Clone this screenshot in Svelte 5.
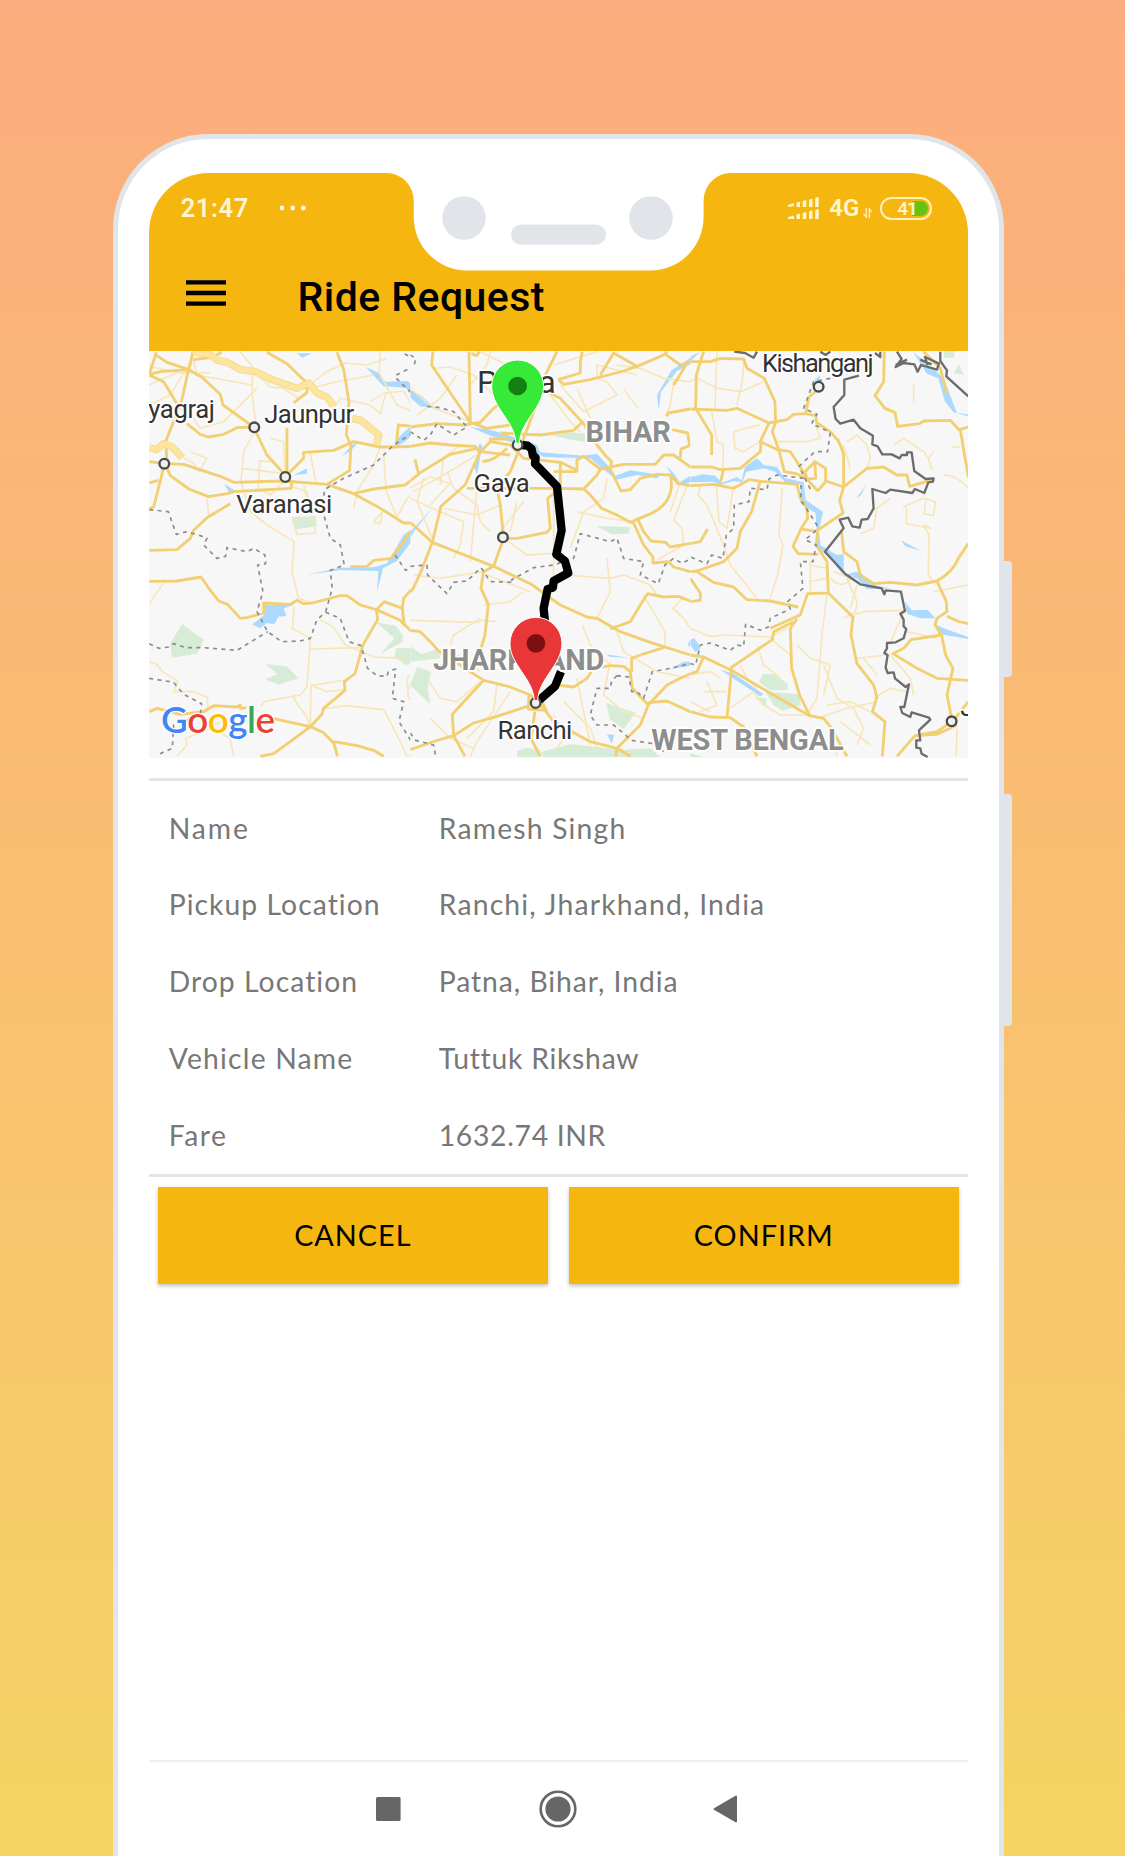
<script>
  const details = [
    ['Name', 'Ramesh Singh'],
    ['Pickup Location', 'Ranchi, Jharkhand, India'],
    ['Drop Location', 'Patna, Bihar, India'],
    ['Vehicle Name', 'Tuttuk Rikshaw'],
    ['Fare', '1632.74 INR']
  ];

  const google = [
    ['G', '#4285f4'], ['o', '#ea4335'], ['o', '#fbbc05'],
    ['g', '#4285f4'], ['l', '#34a853'], ['e', '#ea4335']
  ];

  // Map geometry, one entry per map sheet: west, centre, east.
  const sheets = [
    {
      x: 140,
      width: 270,
      parks: [
        'M126 838L190 884L170 926L95 938L90 894Z',
        'M376 957L440 964L474 1000L415 1019L374 1003L412 988Z',
        'M455 516L525 514L530 543L468 553Z',
        'M708 832L766 842L788 870L785 892L720 927L762 880Z',
        'M768 910L840 908V948L796 960L762 934Z',
        'M840 965L812 985L806 1030L840 1062Z'
      ],
      waters: [
        'M372 779L462 779L430 790L438 813L415 815L402 838L380 834L360 850L336 838L370 812Z',
        'M498 690L600 668L700 667L740 655L790 570L840 535V555L770 648L728 670L710 742L714 678L600 675Z',
        'M676 66L715 84L735 110L800 108L840 132V172L795 128L730 124Z',
        'M768 306L772 280L806 248L826 256L800 285Z',
        'M460 390L500 370V386Z', 'M252 416L282 436V446L266 442Z',
        'M470 25L516 25L486 38Z', 'M606 334L634 300L654 292L630 318Z'
      ],
      highways: [
        'M158 20L212 30L232 46L262 52L300 74L345 80L400 106L470 130L506 114L530 144L560 156L580 182',
        'M636 220L662 226L716 270L708 300', 'M27 308L48 314L70 296L96 306L126 338'
      ],
      minors: [
        'M300 20L336 66L336 150L348 245', 'M158 40L170 90L336 120', 'M346 84L390 126L430 130L470 158L500 150',
        'M520 110L560 80L615 54L680 60L740 40', 'M510 130L590 110L700 90', 'M720 20L716 84L770 180L840 210',
        'M580 190L600 160L690 180L720 206L735 150', 'M27 120L70 100L110 84', 'M27 64L120 84L210 84',
        'M150 50L90 150L27 180', 'M124 170L180 250L250 230L350 130', 'M348 250L310 320L302 410L330 500L380 540L462 590L455 680L474 760L500 768',
        'M304 370L430 386', 'M358 346L354 430L390 450L430 410', 'M356 348L400 350', 'M390 280L430 290L434 380',
        'M510 324L526 410', 'M456 425L500 440L526 564L470 568L455 520', 'M490 420L500 468L552 500', 'M27 776L70 712',
        'M200 462L206 516', 'M128 338L160 355L176 380L200 340L150 320', 'M770 310L720 304L700 360L650 440L640 490',
        'M730 330L738 440L770 516', 'M770 516L800 460L840 430', 'M700 530L726 500L720 536L700 532',
        'M462 784L456 850L510 880L508 912L662 908', 'M540 824L580 848L615 900L700 936L785 940L800 930',
        'M508 912L500 1025L480 1050L370 1070L362 1084', 'M510 1022L612 1006', 'M512 1022L510 1145', 'M456 1048L470 1076L496 1110L510 1145',
        'M512 1020L560 1040L612 1034', 'M550 1092L614 1082L730 1094L770 1170L800 1234', 'M27 950L50 958L66 980L112 1008L100 1040L160 1040L200 1056L204 1088',
        'M110 1234L140 1200L136 1180L190 1160L240 1130', 'M212 1150L270 1180L280 1234', 'M800 1000L840 960M800 1000L805 1060L840 1080',
        'M690 170L730 145L790 138L820 190'
      ],
      roads: [
        'M48 22L27 88', 'M27 88L60 80L146 74L158 20', 'M44 28L80 52L146 74L184 96L240 148L248 180L340 246L380 330L436 392', 'M27 90L70 110L110 176',
        'M144 76L124 168L76 290L80 350', 'M140 236L180 268L204 276L250 268L290 248L340 246', 'M160 44L220 36L244 22',
        'M380 22L440 56L500 114V142L460 174', 'M590 22L610 72L626 170L618 270L632 300L628 376L560 418',
        'M440 248L440 390L490 340L490 322L580 316L640 290L720 306L840 304', 'M768 300L774 240L840 246', 'M72 355L130 358L240 394L280 412L430 408L560 418L640 446L720 490L790 534L828 534L790 590L752 640L700 646L680 664L630 665',
        'M76 360L90 392L146 432L204 455L262 446L280 440L452 430L456 404', 'M27 490L40 486L72 360M27 350L70 356M27 414L54 406',
        'M640 446L700 432L794 420L840 386', 'M270 476L200 518L160 556L150 580L110 614L27 616',
        'M27 709L110 708L182 696L210 736L235 768L262 778L300 820L320 818L370 804V774L450 778L470 766L490 776L516 774L600 752L620 752L660 780L708 794L732 770L786 790L790 760L816 730L840 680',
        'M708 794L712 824L668 900L644 986L612 1010L614 1036L550 1090L545 1108L510 1145L450 1190L400 1226L360 1234',
        'M708 794L780 826L792 840L786 790M792 838L812 858L840 858', 'M27 1100L50 1090L120 1108L190 1100L220 1082L290 1086L300 1080L300 1090L318 1088', 'M400 1120L440 1130L510 1145L548 1162L580 1194L592 1234', 'M580 1190L650 1202L700 1216L730 1234', 'M810 1234L824 1218L840 1212'
      ],
      dashes: [
        'M27 494L84 500L108 568L140 560L180 572L200 580L190 600L230 640L256 634L260 608L320 620L340 610L374 630L376 656L352 660L368 740L350 800L382 860L424 890L480 888L510 880L530 824L556 802L600 820L626 890L662 902L682 970L710 992L740 994L744 980L766 972L756 1060L790 1070L776 1130L816 1194L840 1196',
        'M27 896L56 910L86 906L100 896L136 908L190 908L290 916L382 860', 'M27 1000L100 1012L130 1048L184 1076L180 1110L100 1140L96 1210L50 1230',
        'M556 800L576 730L570 676L612 660L600 600L570 580L548 500L552 434L610 400L700 360L760 300L830 256', 'M768 90L820 64L820 40L786 24', 'M768 100L840 170', 'M764 630L796 676L836 662'
      ],
      borders: []
    },
    {
      x: 410,
      width: 280,
      parks: [
        'M420 270L480 262L524 266V290L480 284Z', 'M556 543L660 546L655 566L605 568Z', 'M588 1074L676 1104L640 1152L598 1122Z',
        'M0 904L34 928L84 912L90 940L0 950Z', 'M20 966L62 980L52 1030L60 1078L0 1020Z',
        'M320 1218L350 1208L390 1214V1236H320Z', 'M390 1222L480 1198L640 1214L720 1210L750 1236H400Z'
      ],
      waters: [
        'M0 136L30 150L76 190L30 184L0 158Z', 'M180 246L240 254L310 276L380 300L390 322L520 332L560 326L600 370L616 392L660 376L750 390L740 400L680 390L618 404L540 340L400 336L330 300L240 272Z',
        'M0 560L66 490L10 560L0 578Z', 'M206 296L216 300L200 390L190 360L202 330Z', 'M840 38L784 76L740 150L745 196L752 140L800 78L840 58Z',
        'M768 362L790 385L808 412L840 392V412L820 420L800 418Z', 'M590 1168L612 1170L604 1196Z', 'M780 972L820 950L840 950V962Z', 'M588 928L654 938L600 936Z', 'M840 884L832 898L840 908Z'
      ],
      highways: [],
      minors: [
        'M70 70L120 66L190 90L260 160', 'M180 120L230 60L240 20', 'M0 130L70 190L180 230', 'M20 210L90 160L140 90',
        'M210 20L290 60', 'M430 60L560 20', 'M450 120L520 200L620 150L590 110L560 100L560 60L680 90', 'M620 60L690 70L760 100L840 110',
        'M420 150L480 230L510 260', 'M640 130L660 160L684 190', 'M790 110L780 180L770 205', 'M540 220L500 130',
        'M10 440L100 390L200 330', 'M40 400L20 470L70 590', 'M100 490L200 510L270 480', 'M110 380L130 430L200 480L210 530L240 560',
        'M200 430L180 650', 'M150 300L100 340L90 420', 'M0 430L60 395L118 416L60 480', 'M0 460L90 500L160 530L150 600L130 640', 'M320 470L300 560M340 470L270 560',
        'M280 580L350 630L430 625', 'M10 690L90 700L220 680', 'M220 780L300 770L340 740', 'M0 826L200 832L216 826L256 830',
        'M210 820L130 870L120 900', 'M230 690L360 740', 'M470 690L600 700L640 690L720 720L740 750', 'M516 840L540 900L600 960',
        'M590 400L580 460L520 500L480 610', 'M590 640L600 740L560 820', 'M430 390L430 700', 'M500 500L590 520L670 530',
        'M832 418L790 525L815 550L820 600L740 645', 'M780 500L810 410', 'M500 1000L540 1200', 'M460 1070L540 1150L560 1210',
        'M260 1010L250 1100L170 1180', 'M210 1010L140 1070L90 1060L50 1000', 'M90 960L140 930L210 980', 'M300 1040L200 1190L180 1234',
        'M430 1110L470 1170L440 1210', 'M620 860L640 920L740 980L840 1000', 'M700 750L764 860V910', 'M820 756L788 790L820 820L840 850', 'M60 1120L120 1180L190 1210',
        'M600 950L580 1050L640 1100L700 1120'
      ],
      roads: [
        'M68 20L64 60L180 232L176 20', 'M184 24Q200 40 206 20', 'M0 246L80 236L160 240L210 232L250 190L320 140', 'M180 232L230 250L300 240',
        'M440 20L400 100L370 200L344 270L300 380L260 430L270 480L280 580L320 580L410 562L420 550L412 460L450 430L520 432',
        'M444 104L460 118L540 104L640 78L680 64', 'M444 104L510 84V52L516 20', 'M570 90L610 24L680 64L760 30L770 20', 'M766 28L810 60L840 52M826 62L790 120',
        'M390 130L450 160L516 232L490 256L390 270L270 264', 'M210 320L240 290L300 300L340 340L450 352L500 376L500 344L520 334L570 372L640 358L735 358L760 330L790 330L840 366',
        'M240 290L240 282H300', 'M210 320L300 330M216 350Q250 350 290 310', 'M0 304L60 294L120 300L196 304L208 324L164 420L92 484L66 592L35 673L10 728L0 742', 'M0 408L30 383L120 328L200 310M14 343L24 384',
        'M430 380H500M450 352V440M430 400V430H170', 'M520 432L560 390L570 372', 'M516 230L560 300L584 330L604 350L600 372L632 438L660 434L690 400L740 388L780 390Q800 480 700 515L680 524L660 532L620 510L574 490L540 450L520 432',
        'M780 390L804 416L840 422', 'M768 214L774 204L840 192M786 254L832 264L838 302L812 312L810 340',
        'M680 518L700 560L722 588L765 592L780 606L840 595', 'M668 530L700 600L728 636V654L775 650L790 666L840 680', 'M0 532L66 592L250 664L360 716L450 780L530 816L560 820L630 860L720 892L840 930',
        'M280 580L250 664L220 680L212 730L234 778L224 870L212 910', 'M600 852L660 830L690 780L712 746L760 756L804 754L840 768', 'M690 930L760 908',
        'M0 856L30 860L60 890L85 918L220 1006L300 1026L360 1050L400 1090L430 1130L540 1190L620 1210L660 1234',
        'M220 1006L126 1108L130 1172L75 1188L0 1214', 'M130 1172L190 1134L260 1114L350 1084', 'M130 1172L164 1234', 'M356 1050L354 1092L408 1096L390 1060M374 1100L362 1180L390 1234',
        'M440 1020L490 1026L530 1000L550 970L600 962L640 964L660 980L666 1030L714 1080', 'M664 980L664 940L690 930', 'M714 1080L770 1020L810 1000L840 986', 'M714 1080L690 1140L620 1210L616 1234', 'M714 1073L770 1068L840 1100'
      ],
      dashes: [
        'M0 30L16 40L10 70', 'M0 260L40 286L60 270L80 236L130 270L170 246L130 200L90 188L50 184',
        'M0 664L50 660L52 690L110 746L130 712L170 708L212 668L240 710L310 712L304 704L370 668L430 660L490 640L510 566L600 590L620 580L640 640L700 650L690 690L744 716L764 660L790 640L815 655L840 642',
        'M620 992L656 996L664 1040L680 1040L700 1060L726 980L770 972L840 956', 'M620 992L604 1008L600 1030L560 1030L540 1110L560 1140L610 1140L664 1186L730 1196L760 1220',
        'M0 1164L16 1186L70 1200L76 1234'
      ],
      borders: []
    },
    {
      x: 690,
      width: 290,
      parks: [
        'M218 986L250 988L292 1016V1034L240 1036L206 1012Z', 'M225 1040L326 1048L332 1080L276 1098L250 1080Z', 'M192 1056L228 1060V1086Z',
        'M760 18H792V38H760Z', 'M806 58L820 90L790 84Z', 'M0 1224L40 1236H0Z'
      ],
      waters: [
        'M0 396L40 388L75 392L94 414L140 396L154 406L164 366L200 340L220 360L260 366L282 398L340 412L346 466L398 500L386 556L390 600L440 630L460 628V690L500 680L520 694L560 722L600 730L530 732L500 700L460 692L420 640L380 606L376 505L330 474L332 418L290 418L255 380L220 370L168 380L156 412L130 408L90 420L70 410L0 412Z',
        'M668 20L720 64L760 100L800 204L834 208V214L790 202L764 170L744 100L710 86Z',
        'M644 770L664 796L712 794L735 820L690 820L650 806Z', 'M734 838L760 850L834 876V882L744 866Z',
        'M498 460L530 418L510 452Z', 'M632 586L692 618L645 604Z', 'M90 974L130 986L220 1048L210 1054Z', 'M0 884L12 880L32 908L16 922L0 900Z',
        'M0 36L28 20L0 50Z', 'M372 106L390 90L384 120Z'
      ],
      highways: [],
      minors: [
        'M0 110L20 100L80 130L150 140L220 110', 'M80 20L74 190', 'M160 50L156 110L140 180', 'M130 260L180 246L210 240', 'M130 260L134 310L160 320L210 290',
        'M64 200L80 290L100 300L96 400', 'M260 290L350 290L390 280L376 240', 'M78 420L86 530L110 550L130 420', 'M30 420L24 450L50 480L100 600L120 660L200 760',
        'M276 430L266 570L278 600L262 690L240 760', 'M470 290L500 270L530 300L540 340L530 370', 'M460 310L440 290L450 280', 'M480 370L460 300',
        'M670 120V176', 'M610 300L640 280L700 320L714 340L726 376', 'M714 340L730 320M785 306H810', 'M760 390Q800 390 834 430',
        'M638 486L700 460L735 470L730 512L702 506L706 470M648 488V536L720 550L700 540L716 570L714 690L730 710', 'M510 566L550 550L560 490L600 460',
        'M420 700Q460 740 490 690M470 700L500 770L496 800L460 820M430 680L480 700', 'M356 660L410 670M356 710L410 700M360 650V740', 'M500 720L480 790',
        'M410 750L396 860L380 1060L350 1110', 'M320 900L360 940L420 960L400 1050', 'M240 880L300 930M200 900L220 960L270 1000', 'M150 960L170 1000L200 1030',
        'M0 850L60 875L100 870L240 876L290 850', 'M0 990L60 980L90 1000', 'M40 1040L110 1040M0 1070L60 1100', 'M50 1010L80 1080L30 1100', 'M120 1090L190 1040L220 1080L270 1110L350 1110',
        'M490 810L520 800L640 796', 'M500 940L590 930M520 940L560 990', 'M640 800L610 870L600 900', 'M550 1060L600 1030L650 1040', 'M410 1080L480 1070L540 1100',
        'M380 1120L470 1090L560 1070', 'M600 930L660 1000L670 1050', 'M730 740L834 720', 'M650 860L740 880', 'M800 1150L798 1234', 'M420 1150L440 1234M450 1130L540 1200', 'M400 960L440 1060L490 1090L520 1150L500 1200'
      ],
      roads: [
        'M40 20L18 90L16 190L64 270V330', 'M0 50H60L90 40L160 42L170 70L222 100L254 170L256 232L246 260L266 316L282 380L318 386L350 402L382 438',
        'M0 192L110 196L140 190L236 234L290 224L310 208L346 206L356 156L400 120', 'M346 206L376 212L380 234L420 260L446 290L460 326V426L448 466L458 504L382 556', 'M236 234L210 290L262 314L300 320L320 350L350 400L344 380L374 350L406 370V408L460 426',
        'M374 350L376 400L350 402M406 410L382 438', 'M0 366H64L90 374L150 370L210 320L212 290', 'M100 374L90 412', 'M0 422L70 418L130 430L176 404L204 408L320 418L330 460L350 490L352 520L332 552L382 560L378 600L410 650L414 744L352 746L330 810L240 850',
        'M210 408L184 500L150 560L140 610L100 650L20 678L0 680', 'M0 596L30 590L52 552', 'M332 552L308 604L324 626L384 628', 'M20 680L70 712L130 726L170 764L240 768L324 786', 'M0 700L30 744V766L0 770',
        'M460 426L530 370L580 366L620 390H650L658 424L728 404', 'M454 560L460 620L500 650L510 690L550 716L600 712L680 720L740 708Q790 680 804 640L834 596', 'M582 20L580 110L554 152L584 190L614 202L622 244L688 236L700 228L780 226L806 254L834 246M810 254L834 396', 'M700 20L750 70L770 146',
        'M414 744L488 816L482 870L500 956L550 1020L560 1058L546 1100L584 1130L576 1234', 'M320 822L300 850L304 970L328 1050L358 1112L400 1120L424 1150L470 1234', 'M310 830L250 860L246 884L140 956L124 966L110 1120',
        'M0 930L40 936L120 974L250 1050L358 1112', 'M40 936L20 980L0 986', 'M0 1100L60 1116L120 1118L160 1146L200 1234', 'M740 708L768 770L770 800L740 820L734 840L754 870L662 884L640 910L608 926L680 970L740 1000L834 1006',
        'M754 870L766 930L788 970L770 1050L784 1120', 'M770 814L806 830L834 836', 'M834 1070L790 1126L740 1160L674 1172L620 1234M674 1172L740 1168L800 1140'
      ],
      dashes: [
        'M420 100L370 110L340 190L380 208L364 236L420 262L412 320L374 320L326 364L364 440',
        'M340 400L260 390L236 402L230 434L180 430L176 470L132 480L130 550L108 570L98 640L64 630L50 656L0 636',
        'M332 420V466L380 540L374 560L344 584L378 600L368 650L330 650L338 730L292 770L300 792L240 820L234 846L210 856L166 838L160 904L140 900L120 916L60 894L30 900L16 960L0 956'
      ],
      borders: [
        'M506 92L462 104V150L430 186L436 222L450 236L490 224L510 250L548 272L546 298L562 304L576 328H604L628 340L634 330H650V322H664L672 378L706 402L730 400L728 410L714 412L702 444L674 432L666 444L600 434L586 444L546 432L550 490L532 522L514 524L508 548L486 544L474 518L448 524L460 550L404 620L466 688L510 718L574 730L582 748L586 736L632 740L644 798L630 806L640 824V844L648 852L640 880L616 892L590 894V910L582 924L592 930L586 968L592 984L610 982L614 1000L646 1026L656 1018L642 1086H630L636 1104L660 1116L664 1102L716 1118L720 1124L686 1156L690 1186H678V1208L690 1210L694 1226L712 1236',
        'M132 20L164 24L190 38L200 20M390 20L406 30L420 20M554 24L570 36V20',
        'M620 20L634 42L616 66L640 54L672 58L682 80L692 60L740 74L746 56L704 36L712 60M616 60L650 44M690 44L724 58M750 20V48L770 76L768 94L834 154'
      ]
    }
  ];

  const towns = [
    [342, 247], [72, 356], [435, 396], [1088, 577], [2035, 125], [2434, 1129], [1132, 300], [1186, 1074]
  ];
</script>

{#snippet pin(x, y, fill, dot)}
  <g transform="translate({x} {y})">
    <path d="M-5 172C-8 105 -78 65 -78 0A78 78 0 0 1 78 0C78 65 8 105 5 172Z" {fill} stroke="#fff" stroke-width="3" />
    <circle r="28" fill={dot} />
  </g>
{/snippet}

<main>
  <div class="phone">
    <i class="key short"></i>
    <i class="key long"></i>
    <div class="screen">
      <svg class="notch" width="346" height="99" viewBox="0 0 346 99">
        <path d="M0 0A27.5 27.5 0 0 1 27.7 27.5V44A53.5 53.5 0 0 0 81 97.6H264A53.5 53.5 0 0 0 317.6 44V27.5A27.5 27.5 0 0 1 346 0Z" fill="#fff" />
        <circle cx="78" cy="45" r="21.8" fill="#e1e5ea" />
        <circle cx="265" cy="45" r="21.8" fill="#e1e5ea" />
        <rect x="125" y="51.5" width="95" height="20.3" rx="10.1" fill="#e1e5ea" />
      </svg>

      <header>
        <div class="status">
          <span class="clock">21:47</span>
          <svg class="dots" width="28" height="6" viewBox="0 0 28 6" fill="#fffbe9">
            <circle cx="3" cy="3" r="2.4" /><circle cx="13.7" cy="3" r="2.4" /><circle cx="24.4" cy="3" r="2.4" />
          </svg>
          <svg class="signal" width="32" height="24" viewBox="0 0 32 24" fill="#fff5cf">
            <path d="M0 8L6 6V9L0 10ZM8.500 5.500L12 4.700V10H8.500ZM14.700 4L18.300 3V10H14.700ZM21 2.500L24.500 1.700V10H21ZM27.200 1L30.700 0V10H27.200Z" />
            <path d="M0 20L6 18.500V22H0ZM8.500 17.500L12 16.500V22H8.500ZM14.700 16L18.300 15V22H14.700ZM21 14.500L24.500 13.500V22H21ZM27.200 13L30.700 12V22H27.200Z" />
          </svg>
          <span class="net">4G</span>
          <svg class="arrows" width="10" height="10" viewBox="0 0 10 10" fill="none" stroke="#fff0bd" stroke-width="1.400">
            <path d="M3.200 0V9L0.500 6M6.300 10V1L9 4" />
          </svg>
          <span class="battery"><span>41</span></span>
        </div>
        <div class="bar">
          <svg width="40" height="26" viewBox="0 0 40 26"><path d="M0 2.300H40M0 13H40M0 23.700H40" stroke="#000" stroke-width="4.300" /></svg>
          <h1>Ride Request</h1>
        </div>
      </header>

      <svg class="map" viewBox="148.700 351 819.600 406.600" preserveAspectRatio="none">
        {#each sheets as s}
          <svg x={s.x} y="345" width={s.width} height="420" viewBox="0 0 {s.width * 3} 1260">
            {#each s.parks as d}<path class="park" {d} />{/each}
            {#each s.waters as d}<path class="water" {d} />{/each}
            {#each s.minors as d}<path class="minor" {d} />{/each}
            {#each s.roads as d}<path class="road" {d} />{/each}
            {#each s.highways as d}<path class="casing" {d} /><path class="highway" {d} />{/each}
            {#each s.dashes as d}<path class="dash" {d} />{/each}
            {#each s.borders as d}<path class="border" {d} />{/each}
          </svg>
        {/each}
        <g transform="translate(140 345) scale(.33333)">
          <path class="route" d="M1146 300L1162 302L1174 312L1178 332L1186 338L1184 356L1250 424L1264 556L1248 628L1274 648L1284 684L1240 708L1238 728L1222 732L1210 790L1216 850" />
          <path class="route" d="M1262 980L1244 1024L1196 1066" />
          {#each towns as [x, y]}<circle class="town" cx={x} cy={y} r="14.500" />{/each}
          <g class="label">
            <text x="24" y="220" textLength="200">yagraj</text>
            <text x="372" y="234" textLength="270">Jaunpur</text>
            <text x="288" y="504" textLength="288">Varanasi</text>
            <text x="1000" y="440" textLength="168">Gaya</text>
            <text x="1072" y="1182" textLength="224">Ranchi</text>
            <text x="1865" y="80" textLength="335">Kishanganj</text>
            <text class="large" x="1010" y="145" textLength="236">Patna</text>
            <text x="2460" y="1113">J</text>
          </g>
          <g class="label region">
            <text x="1336" y="290" textLength="256">BIHAR</text>
            <text x="878" y="976" textLength="514">JHARKHAND</text>
            <text x="1533" y="1214" textLength="577">WEST BENGAL</text>
          </g>
          {@render pin(1132, 123, '#38ea38', '#128012')}
          {@render pin(1187, 895, '#e93636', '#7c1011')}
          <text class="google" x="62" y="1164" textLength="342">{#each google as [c, fill]}<tspan {fill}>{c}</tspan>{/each}</text>
        </g>
      </svg>

      <dl>
        {#each details as [term, value], i}
          <div class="row"><dt class="t{i}">{term}</dt><dd class="v{i}">{value}</dd></div>
        {/each}
      </dl>

      <div class="actions">
        <button>CANCEL</button>
        <button>CONFIRM</button>
      </div>

      <nav>
        <svg width="25" height="24" viewBox="0 0 25 24"><rect width="24.600" height="24" rx="1.500" fill="#666" /></svg>
        <svg width="38" height="38" viewBox="0 0 38 38"><circle cx="19" cy="19" r="17.300" fill="none" stroke="#666" stroke-width="2.600" /><circle cx="19" cy="19" r="12.600" fill="#666" /></svg>
        <svg width="25" height="28" viewBox="0 0 25 28"><path d="M1.500 14L23 1.500V26.500Z" fill="#666" stroke="#666" stroke-width="2" stroke-linejoin="round" /></svg>
      </nav>
    </div>
  </div>
</main>

<style>
  :global(body) { margin: 0; }
  main {
    box-sizing: border-box; width: 1125px; height: 1856px; overflow: hidden;
    padding: 134.300px 0 0 112.700px;
    background: linear-gradient(#fcac7e, #f5d363);
  }
  .phone {
    box-sizing: border-box; position: relative; width: 891.300px; height: 1800px;
    border: 5.700px solid #e1e5ea; border-bottom: 0; border-radius: 95px 95px 0 0;
    background: #fff; padding: 33.500px 31px 0;
  }
  .key { position: absolute; right: -13px; width: 8px; background: #e1e5ea; border-radius: 0 4px 4px 0; }
  .short { top: 422px; height: 116px; }
  .long { top: 654.300px; height: 232px; }
  .screen { position: relative; width: 819.600px; height: 1683px; border-radius: 60px 60px 0 0; overflow: hidden; display: flex; flex-direction: column; }
  .notch { position: absolute; left: 237px; top: 0; }
  header { height: 178.300px; flex: none; background: #f5b60f; }
  .status {
    display: flex; align-items: center; box-sizing: border-box; height: 70px; padding: 1px 36px 0 32px;
    font: 500 25.500px/30px Roboto, sans-serif; color: #fff5cf;
  }
  .clock { width: 68px; font-weight: 600; letter-spacing: .600px; }
  .dots { margin-left: 30px; }
  .signal { margin-left: auto; position: relative; top: 1px; }
  .net { margin-left: 9px; font-size: 24px; font-weight: 600; width: 31px; }
  .arrows { margin: 9px 0 0 3px; }
  .battery {
    box-sizing: border-box; margin-left: 7px; width: 52px; height: 23px; border: 2px solid #fff0bd; border-radius: 12px;
    padding: 2px; display: flex; font-size: 19px; line-height: 16px; color: #fff5cf;
  }
  .battery span { box-sizing: border-box; flex: 1; border-radius: 8px; padding-left: 13px; letter-spacing: -1px; background: linear-gradient(90deg, transparent 64%, #65c313 64%); }
  .bar { display: flex; align-items: center; height: 76px; padding: 0 0 0 37.300px; margin-top: 15.800px; }
  .bar svg { margin-top: -7px; }
  h1 { margin: 0 0 0 71.500px; font: 500 41px/50px Roboto, sans-serif; color: #000; letter-spacing: .450px; }

  .map { flex: none; width: 819.600px; height: 406.600px; background: #f7f7f7; }
  .map path { stroke-linejoin: round; }
  .park { fill: #d6ecd6; }
  .water { fill: #abd9ff; }
  .minor, .road, .highway, .casing, .dash, .border, .route { fill: none; }
  .minor { stroke: #f8e5b8; stroke-width: 4.800; }
  .road { stroke: #f2cf70; stroke-width: 8.500; }
  .casing { stroke: #f4d98c; stroke-width: 22; }
  .highway { stroke: #fde5a0; stroke-width: 17; }
  .dash { stroke: #8c8c8c; stroke-width: 5; stroke-dasharray: 12 13; }
  .border { stroke: #6c6c6c; stroke-width: 7; }
  .route { stroke: #000; stroke-width: 25; stroke-linejoin: round; }
  .town { fill: #f0f0f0; stroke: #4a4a4a; stroke-width: 7; }
  .label text { font: 400 77px Roboto, sans-serif; fill: #333; stroke: #fff; stroke-width: 10; paint-order: stroke; stroke-linejoin: round; }
  .label .large { font-size: 95px; }
  .label.region text { font-weight: 700; font-size: 87px; fill: #8d8d8d; }
  .google { font: 600 110px Lato, sans-serif; stroke: #fff; stroke-width: 8; paint-order: stroke; }

  dl {
    box-sizing: border-box; flex: none; height: 399px; margin: 20px 0 0; padding-top: 9px;
    border-top: 3px solid #e2e6ea; border-bottom: 3px solid #e2e6ea;
    font: 400 28.300px/76.800px Lato, sans-serif; color: #777;
  }
  .row { display: flex; height: 76.800px; padding-left: 20px; white-space: nowrap; letter-spacing: 1.200px; }
  dt { width: 270px; }
  dd { margin: 0; }
  .t0 { letter-spacing: 1.900px; }
  .t1, .t2 { letter-spacing: 1.050px; }
  .t4 { letter-spacing: 1.500px; }
  .v2 { letter-spacing: .950px; }
  .v3 { letter-spacing: .750px; }
  .v4 { letter-spacing: .700px; }
  .actions { display: flex; gap: 21.300px; padding: 10px 9.700px 0 9.300px; }
  button {
    flex: 1; height: 97.500px; padding: 0; border: 0; background: #f5b60f; color: #000;
    font: 400 28.800px/97px Lato, sans-serif; letter-spacing: 1px; box-shadow: 0 2px 4px rgb(0 0 0 / .25);
  }
  nav {
    display: flex; align-items: center; box-sizing: border-box; height: 96px; margin-top: auto; border-top: 2px solid #efefef;
    padding-left: 227px;
  }
  nav svg + svg { margin-left: 138.500px; }
  nav svg + svg + svg { margin-left: 135.500px; }
</style>
